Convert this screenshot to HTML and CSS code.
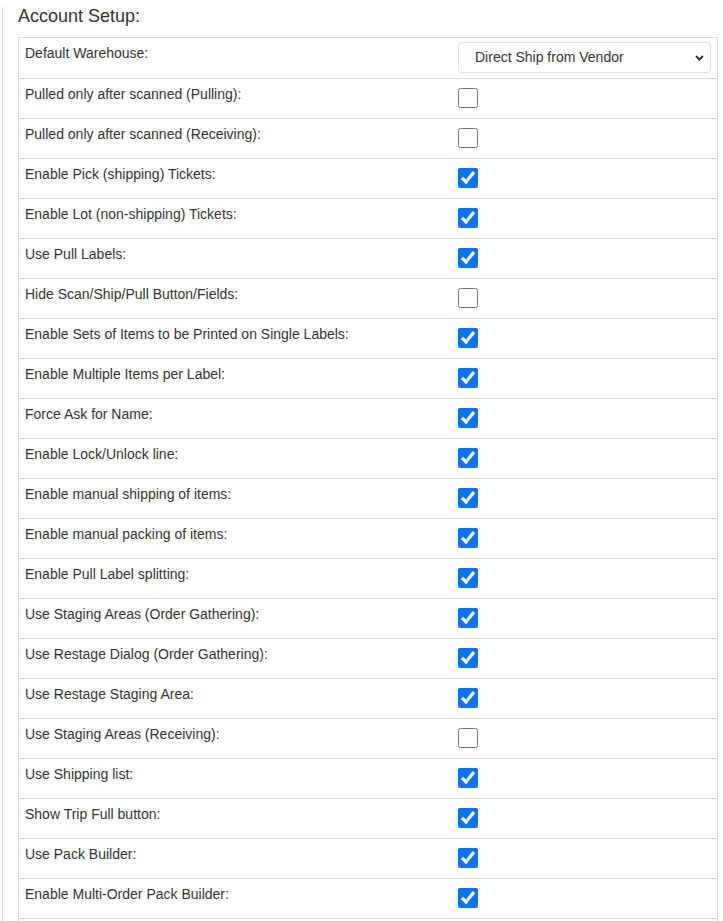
FILE: index.html
```html
<!DOCTYPE html>
<html lang="en">
<head>
    <meta charset="UTF-8">
    <meta name="viewport" content="width=device-width, initial-scale=1.0">
    <title>Account Setup</title>
    <link rel="stylesheet" href="styles.css">
</head>
<body>
    <div class="panel">
        <h3>Account Setup:</h3>
        <div class="settings">
            <div class="row first">
                <div class="label">Default Warehouse:</div>
                <div class="value">
                    <div class="select-wrap">
                        <select class="form-control">
                            <option>Direct Ship from Vendor</option>
                            <option>Main Warehouse</option>
                        </select>
                        <svg class="chevron" width="9" height="6" viewBox="0 0 9 6"><path d="M1 1 L4.5 4.5 L8 1" fill="none" stroke="#333" stroke-width="2"/></svg>
                    </div>
                </div>
            </div>
            <div class="row"><div class="label">Pulled only after scanned (Pulling):</div><div class="value"><input type="checkbox"></div></div>
            <div class="row"><div class="label">Pulled only after scanned (Receiving):</div><div class="value"><input type="checkbox"></div></div>
            <div class="row"><div class="label">Enable Pick (shipping) Tickets:</div><div class="value"><input type="checkbox" checked></div></div>
            <div class="row"><div class="label">Enable Lot (non-shipping) Tickets:</div><div class="value"><input type="checkbox" checked></div></div>
            <div class="row"><div class="label">Use Pull Labels:</div><div class="value"><input type="checkbox" checked></div></div>
            <div class="row"><div class="label">Hide Scan/Ship/Pull Button/Fields:</div><div class="value"><input type="checkbox"></div></div>
            <div class="row"><div class="label">Enable Sets of Items to be Printed on Single Labels:</div><div class="value"><input type="checkbox" checked></div></div>
            <div class="row"><div class="label">Enable Multiple Items per Label:</div><div class="value"><input type="checkbox" checked></div></div>
            <div class="row"><div class="label">Force Ask for Name:</div><div class="value"><input type="checkbox" checked></div></div>
            <div class="row"><div class="label">Enable Lock/Unlock line:</div><div class="value"><input type="checkbox" checked></div></div>
            <div class="row"><div class="label">Enable manual shipping of items:</div><div class="value"><input type="checkbox" checked></div></div>
            <div class="row"><div class="label">Enable manual packing of items:</div><div class="value"><input type="checkbox" checked></div></div>
            <div class="row"><div class="label">Enable Pull Label splitting:</div><div class="value"><input type="checkbox" checked></div></div>
            <div class="row"><div class="label">Use Staging Areas (Order Gathering):</div><div class="value"><input type="checkbox" checked></div></div>
            <div class="row"><div class="label">Use Restage Dialog (Order Gathering):</div><div class="value"><input type="checkbox" checked></div></div>
            <div class="row"><div class="label">Use Restage Staging Area:</div><div class="value"><input type="checkbox" checked></div></div>
            <div class="row"><div class="label">Use Staging Areas (Receiving):</div><div class="value"><input type="checkbox"></div></div>
            <div class="row"><div class="label">Use Shipping list:</div><div class="value"><input type="checkbox" checked></div></div>
            <div class="row"><div class="label">Show Trip Full button:</div><div class="value"><input type="checkbox" checked></div></div>
            <div class="row"><div class="label">Use Pack Builder:</div><div class="value"><input type="checkbox" checked></div></div>
            <div class="row"><div class="label">Enable Multi-Order Pack Builder:</div><div class="value"><input type="checkbox" checked></div></div>
            <div class="row"></div>
        </div>
    </div>
</body>
</html>
```

FILE: styles.css
```css
/* Global styles */
html {
    overflow: hidden;
}
body {
    margin: 0;
    font-family: "Liberation Sans", Arial, sans-serif;
    font-size: 14px;
    color: #333;
    background-color: #fff;
}
.panel {
    margin-left: 2px;
    border-left: 1px solid #d4d4d4;
    padding: 0 5px 0 15px;
    min-height: 1000px;
}
h3 {
    margin: 7px 0 10px;
    font-size: 18px;
    font-weight: normal;
    line-height: 1.1;
}
/* Settings table */
.settings {
    width: 700px;
    box-sizing: border-box;
    border: 1px solid #e1d9cb;
    border-bottom: none;
}
.row {
    display: flex;
    height: 40px;
    box-sizing: border-box;
    border-bottom: 1px solid #e1d9cb;
}
.row.first {
    height: 41px;
}
.label {
    width: 433px;
    padding: 5px 6px 0;
    box-sizing: border-box;
    line-height: 20px;
}
.value {
    flex: 1;
    display: flex;
    align-items: center;
    padding: 0 6px;
}
.row.first .value {
    align-items: flex-start;
    padding-top: 4px;
}
.select-wrap {
    position: relative;
    width: 100%;
}
.form-control {
    display: block;
    width: 100%;
    height: 31px;
    padding: 0 24px 0 16px;
    font-family: "Liberation Sans", Arial, sans-serif;
    font-size: 14px;
    color: #333;
    background-color: #fff;
    border: 1px solid #e4ded3;
    border-radius: 4px;
    appearance: none;
    -webkit-appearance: none;
}
.chevron {
    position: absolute;
    right: 7px;
    top: 13px;
    pointer-events: none;
}
input[type="checkbox"] {
    width: 20px;
    height: 20px;
    margin: 0;
}
```
